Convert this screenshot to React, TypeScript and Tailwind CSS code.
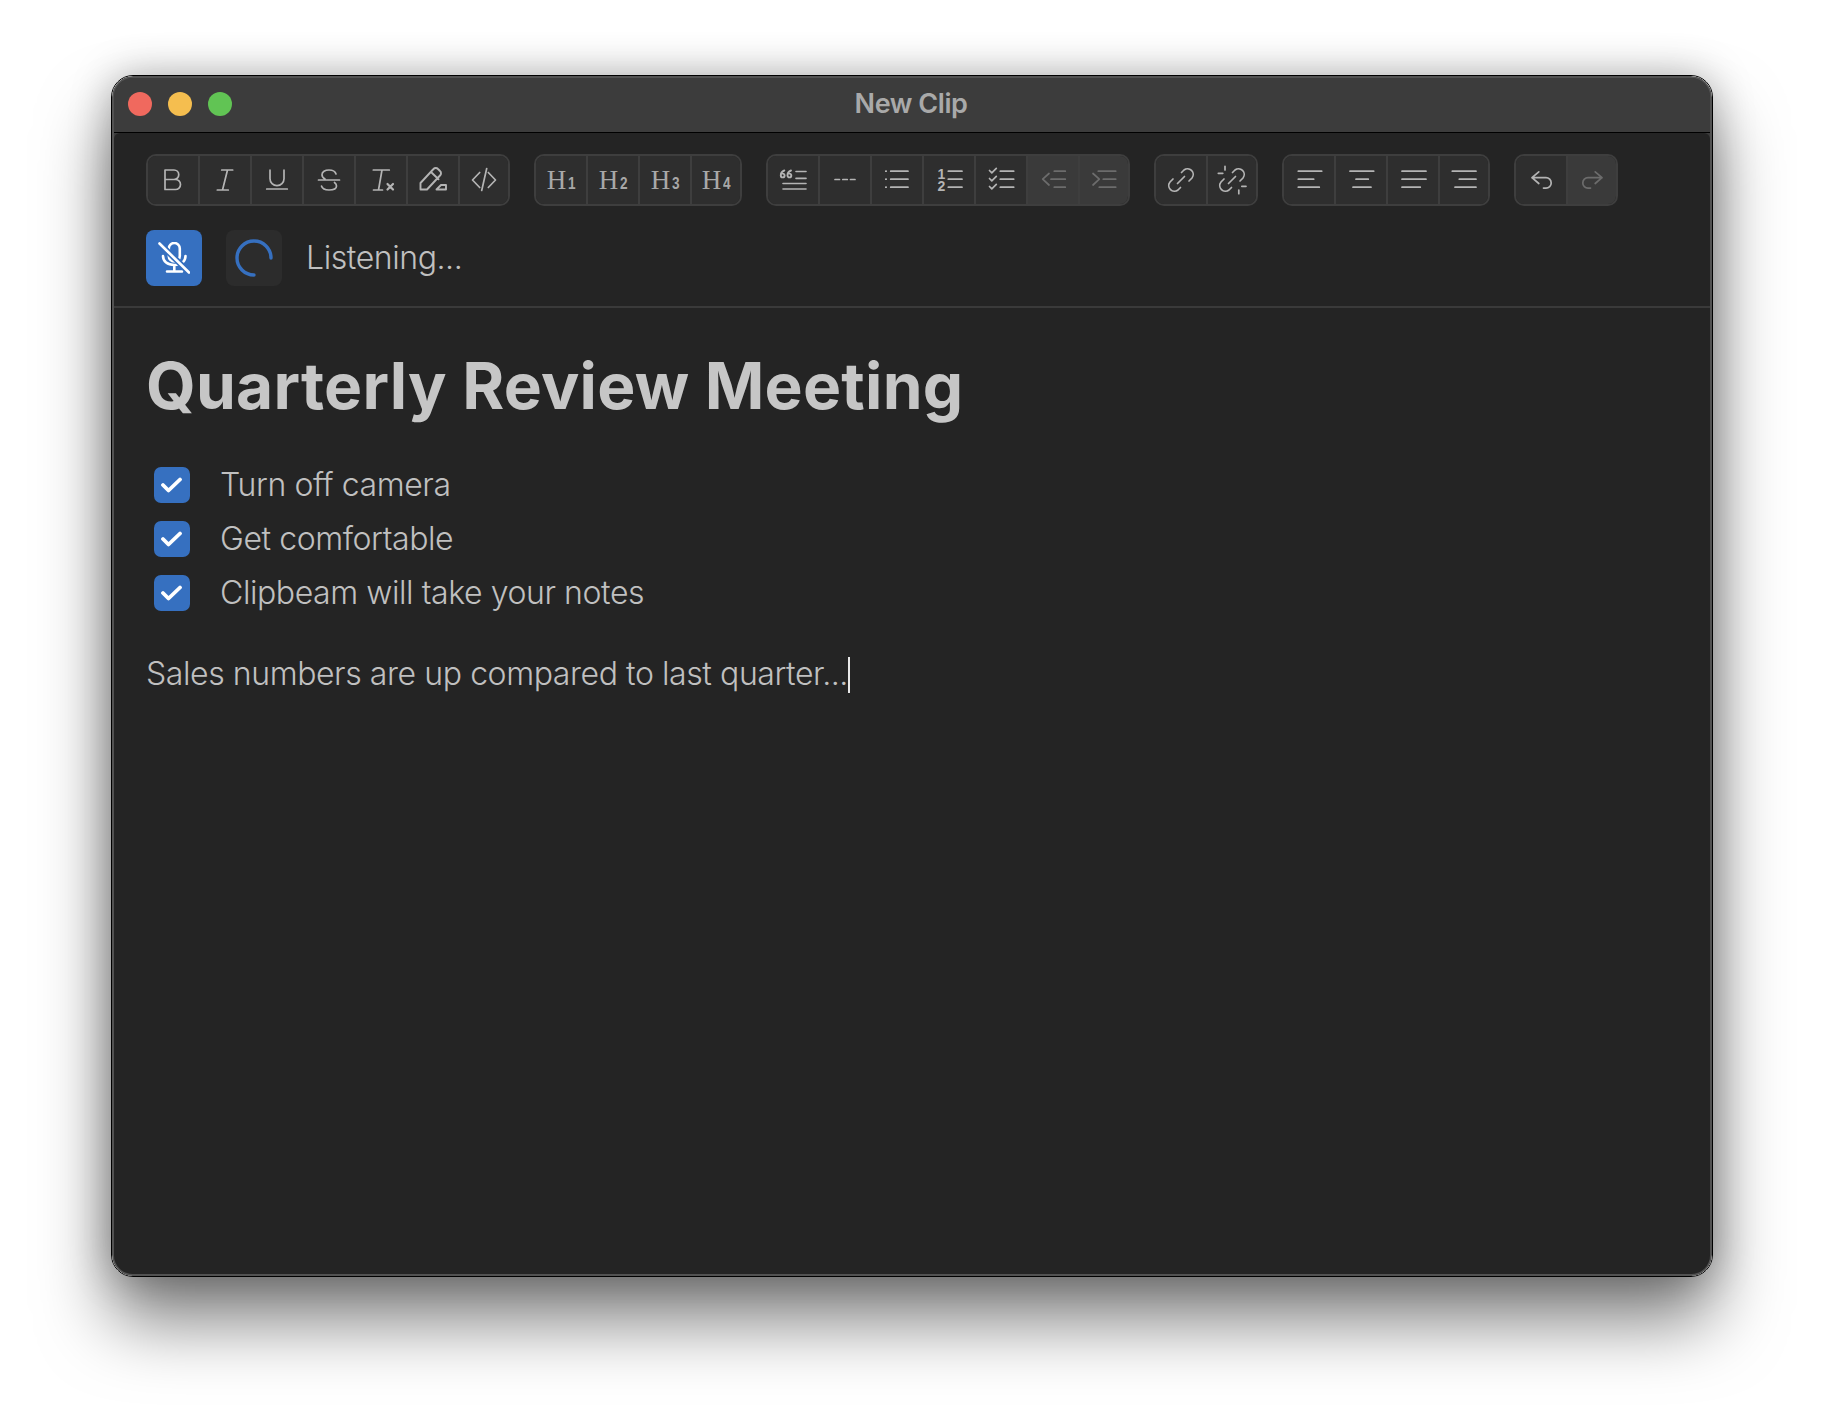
import type { ReactNode } from 'react'

const ink = '#b4b4b4'
const dim = '#6c6c6c'

function Icon({ children, color = ink, w = 1.7 }: { children: ReactNode; color?: string; w?: number }) {
  return (
    <svg width="28" height="28" viewBox="0 0 28 28" fill="none" stroke={color} strokeWidth={w} strokeLinecap="round" strokeLinejoin="round" className="overflow-visible">
      {children}
    </svg>
  )
}

function Lines({ rows }: { rows: number[][] }) {
  return (
    <>
      {rows.map((r, i) => (
        <path key={i} d={`M${r[0]} ${r[2]}H${r[1]}`} />
      ))}
    </>
  )
}

function Heading({ n }: { n: number }) {
  return (
    <span className="flex items-baseline text-[#a8a8a8]">
      <span className="font-['Liberation_Serif',serif] text-[27px] leading-none">H</span>
      <span className="inline-block w-[7px] font-['Liberation_Sans',sans-serif] text-[17px] font-bold leading-none ml-[2px] scale-x-[0.8] origin-left">{n}</span>
    </span>
  )
}

type Cell = { key: string; node: ReactNode; off?: boolean }

const link = (
  <>
    <path d="M14.5 6.5 17 4a5.7 5.7 0 0 1 8 8l-3 3" />
    <path d="M13.5 21.5 11 24a5.7 5.7 0 0 1-8-8l3-3" />
    <path d="M10.5 17.5 17.5 10.5" />
  </>
)

const groups: Cell[][] = [
  [
    { key: 'bold', node: <Icon><path d="M6 4h9a4.75 4.75 0 0 1 0 9.5H6zM6 13.5h10.5a5 5 0 0 1 0 10H6z" /></Icon> },
    { key: 'italic', node: <Icon><path d="M10.7 4h11M6.3 24h11M16.5 4l-5 20" /></Icon> },
    { key: 'underline', node: <Icon><path d="M3.7 23h20.6M7 4.2v8.5a7 7 0 0 0 14 0V4.2" /></Icon> },
    { key: 'strike', node: <Icon><path d="M3.5 14h21M21 8c-.8-2.7-3.5-4-7-4-4 0-7 1.8-7 4.7 0 1.8 1 3.200 3 4.300M19.500 16.500c1.300 1 2 2.200 2 3.500 0 2.600-3.200 4-7.500 4-3.800 0-6.700-1.300-7.500-4" /></Icon> },
    {
      key: 'clear',
      node: (
        <Icon>
          <path d="M6.3 4h16M15 4l-3.500 20M6.500 24h9" />
          <path d="M20.500 18l5.500 5.500M26 18l-5.500 5.500" strokeWidth="2.200" />
        </Icon>
      ),
    },
    {
      key: 'highlight',
      node: (
        <Icon w={1.9}>
          <path d="M1.500 23.500V17L14.500 3a3 3 0 0 1 4.500 0l2 2a3 3 0 0 1 0 4.500L8 23.500zM12 6l7.500 7.300M17.500 23.500l4.500-4.500h5v4.500z" />
        </Icon>
      ),
    },
    { key: 'code', node: <Icon><path d="M9.700 6.500 2.500 14l7.200 7.500M16.700 2.500l-5 22M18.300 6.500l7.200 7.500-7.200 7.500" /></Icon> },
  ],
  [1, 2, 3, 4].map((n) => ({ key: `h${n}`, node: <Heading n={n} /> })),
  [
    {
      key: 'quote',
      node: (
        <Icon w={1.6}>
          <path d="M5.300 4.500C3 5.300 1.800 7 1.800 9.500a1.900 1.900 0 1 0 1.900-1.900M12 4.500c-2.300.8-3.500 2.500-3.500 5a1.900 1.900 0 1 0 1.900-1.900" strokeWidth="1.900" />
          <Lines rows={[[17, 27, 5.500], [17, 27, 12.400], [4, 27, 17.500], [4, 27, 23]]} />
        </Icon>
      ),
    },
    { key: 'rule', node: <Icon><Lines rows={[[4, 8.500, 13.500], [11.800, 16.300, 13.500], [19.500, 24, 13.500]]} /></Icon> },
    {
      key: 'bullets',
      node: (
        <Icon>
          <Lines rows={[[7.700, 25, 5.200], [7.700, 25, 13.200], [7.700, 25, 21.200], [2.800, 3.200, 5.200], [2.800, 3.200, 13.200], [2.800, 3.200, 21.200]]} />
        </Icon>
      ),
    },
    {
      key: 'ordered',
      node: (
        <Icon>
          <Lines rows={[[13.300, 27, 5.200], [13.300, 27, 13.200], [13.300, 27, 21.200]]} />
          <text x="2.500" y="12.500" fill={ink} stroke="none" fontFamily="Liberation Sans" fontWeight="700" fontSize="14">1</text>
          <text x="2.500" y="25.200" fill={ink} stroke="none" fontFamily="Liberation Sans" fontWeight="700" fontSize="14">2</text>
        </Icon>
      ),
    },
    {
      key: 'tasks',
      node: (
        <Icon>
          <Lines rows={[[13.300, 26.700, 5.200], [13.300, 26.700, 13.200], [13.300, 26.700, 21.200]]} />
          <path d="M2.500 4.500l2.300 2.300 4.500-4.500M2.500 12.500l2.300 2.300 4.500-4.500M2.500 20.500l2.300 2.300 4.500-4.500" />
        </Icon>
      ),
    },
    {
      key: 'outdent',
      off: true,
      node: (
        <Icon color={dim}>
          <path d="M10 7.500 3.700 13.200 10 19" />
          <Lines rows={[[15.300, 26.300, 5.200], [12, 26.300, 13.200], [15.300, 26.300, 21.200]]} />
        </Icon>
      ),
    },
    {
      key: 'indent',
      off: true,
      node: (
        <Icon color={dim}>
          <path d="M3 7.500 9.300 13.200 3 19" />
          <Lines rows={[[8.300, 25.700, 5.200], [13.300, 25.700, 13.200], [9.300, 25.700, 21.200]]} />
        </Icon>
      ),
    },
  ],
  [
    { key: 'link', node: <Icon>{link}</Icon> },
    {
      key: 'unlink',
      node: (
        <Icon>
          {link}
          <path d="M7 .3v3.700M.3 7.300h4.500M20.800 24v3.700M23.800 20.300H28" />
        </Icon>
      ),
    },
  ],
  [
    { key: 'left', node: <Icon><Lines rows={[[3.300, 26.700, 5.200], [3.300, 18.700, 13.200], [3.300, 24.300, 21.200]]} /></Icon> },
    { key: 'center', node: <Icon><Lines rows={[[3, 26.700, 5.200], [9, 21.300, 13.200], [6, 24, 21.200]]} /></Icon> },
    { key: 'justify', node: <Icon><Lines rows={[[3, 27, 5.200], [3, 27, 13.200], [3, 21.300, 21.200]]} /></Icon> },
    { key: 'right', node: <Icon><Lines rows={[[2.300, 26, 5.200], [9.300, 26, 13.200], [5, 26, 21.200]]} /></Icon> },
  ],
  [
    { key: 'undo', node: <Icon><path d="M11.800 5.800 5 11.700l6.800 5.800M5 11.700h14a5.200 5.200 0 0 1 0 10.400h-2.500" /></Icon> },
    { key: 'redo', off: true, node: <Icon color={dim}><path d="M17.200 5.800l6.800 5.900-6.800 5.800M24 11.700H10a5.200 5.200 0 0 0 0 10.400h2.500" /></Icon> },
  ],
]

function ToolGroup({ cells }: { cells: Cell[] }) {
  return (
    <div className="flex h-[52px] rounded-[10px] border-2 border-[#3e3e3e] overflow-hidden">
      {cells.map((c, i) => (
        <div
          key={c.key}
          className={`flex items-center justify-center ${c.off ? 'bg-[#3a3a3a]' : 'bg-[#2e2e2e]'} ${
            i < cells.length - 1 ? 'w-[52px] border-r-2 border-[#3e3e3e]' : 'w-[48px]'
          }`}
        >
          {c.node}
        </div>
      ))}
    </div>
  )
}

function CheckRow({ label }: { label: string }) {
  return (
    <div className="flex items-center h-[54px] pl-2">
      <div className="flex items-center justify-center w-9 h-9 rounded-[7px] bg-[#3670c0]">
        <svg width="22" height="22" viewBox="0 0 22 22" fill="none" stroke="#ffffff" strokeWidth="3.800" strokeLinecap="round" strokeLinejoin="round">
          <path d="M2 11 7.500 16.500 19 5.500" />
        </svg>
      </div>
      <span className="ml-[30px] text-[32px] font-[350] tracking-[-0.42px] text-[#c0c0c0]">{label}</span>
    </div>
  )
}

export default function App() {
  return (
    <div className="w-full h-[1424px] bg-white pt-[75px] pl-[111px] font-['Inter',sans-serif] overflow-hidden">
      <div className="w-[1602px] h-[1202px] rounded-[22px] border border-black overflow-hidden shadow-[0_44px_70px_rgba(0,0,0,0.5),0_0_40px_rgba(0,0,0,0.28)]">
        <div className="flex flex-col h-full rounded-[21px] border-2 border-[#525252] bg-[#3c3c3c] overflow-hidden">
          <div className="grid grid-cols-[1fr_auto_1fr] items-center h-[55px] shrink-0 pb-[2px] bg-[#3c3c3c] border-b border-black">
            <div className="flex gap-4 pl-[14px]">
              <span className="w-6 h-6 rounded-full bg-[#f0695e]" />
              <span className="w-6 h-6 rounded-full bg-[#f5be4f]" />
              <span className="w-6 h-6 rounded-full bg-[#61c454]" />
            </div>
            <span className="text-[27px] font-semibold text-[#a9a9a9] tracking-[-0.45px] -translate-x-px">New Clip</span>
            <span />
          </div>
          <div className="flex flex-col flex-1 bg-[#242424] rounded-t-[6px]">
            <div className="pl-[32px] pt-[21px] pb-5 border-b-2 border-[#3a3a3a]">
              <div className="flex gap-6">
                {groups.map((g) => (
                  <ToolGroup key={g[0].key} cells={g} />
                ))}
              </div>
              <div className="flex items-center mt-6">
                <div className="flex items-center justify-center w-14 h-14 rounded-lg bg-[#3670c0]">
                  <svg width="32" height="32" viewBox="0 0 32 32" fill="none" stroke="#ffffff" strokeWidth="2.600" strokeLinecap="round" strokeLinejoin="round">
                    <path d="M10.800 6.500a5.500 5.500 0 0 1 11 0v7.500a5.500 5.500 0 0 1-11 0z" />
                    <path d="M5 14c0 5.500 4.500 9 11.300 9s11.200-3.500 11.200-9M16.300 23v6.500M9 29.500h15" />
                    <path d="M1 1l30 29.300" stroke="#3670c0" strokeWidth="6" />
                    <path d="M1.500 1.500l29.500 29" />
                  </svg>
                </div>
                <div className="flex items-center justify-center w-14 h-14 ml-6 rounded-lg bg-[#2c2c2c]">
                  <svg width="40" height="40" viewBox="0 0 40 40" fill="none" stroke="#3670c0" strokeWidth="3.400" strokeLinecap="round">
                    <path d="M37 20A17 17 0 1 0 20 37" />
                  </svg>
                </div>
                <span className="ml-6 text-[32px] font-[350] tracking-[-0.42px] text-[#c0c0c0]">Listening...</span>
              </div>
            </div>
            <div className="pl-[32px] pt-[39px]">
              <h1 className="text-[64px] leading-[77px] font-bold tracking-[0.25px] text-[#c6c6c6] mb-[34px]">Quarterly Review Meeting</h1>
              <CheckRow label="Turn off camera" />
              <CheckRow label="Get comfortable" />
              <CheckRow label="Clipbeam will take your notes" />
              <p className="mt-[30px] text-[32px] leading-[48px] font-[350] tracking-[-0.42px] text-[#c0c0c0]">
                Sales numbers are up compared to last quarter...
                <span className="inline-block w-[2px] h-[36px] bg-[#e8e8e8] align-[-8px]" />
              </p>
            </div>
          </div>
        </div>
      </div>
    </div>
  )
}
